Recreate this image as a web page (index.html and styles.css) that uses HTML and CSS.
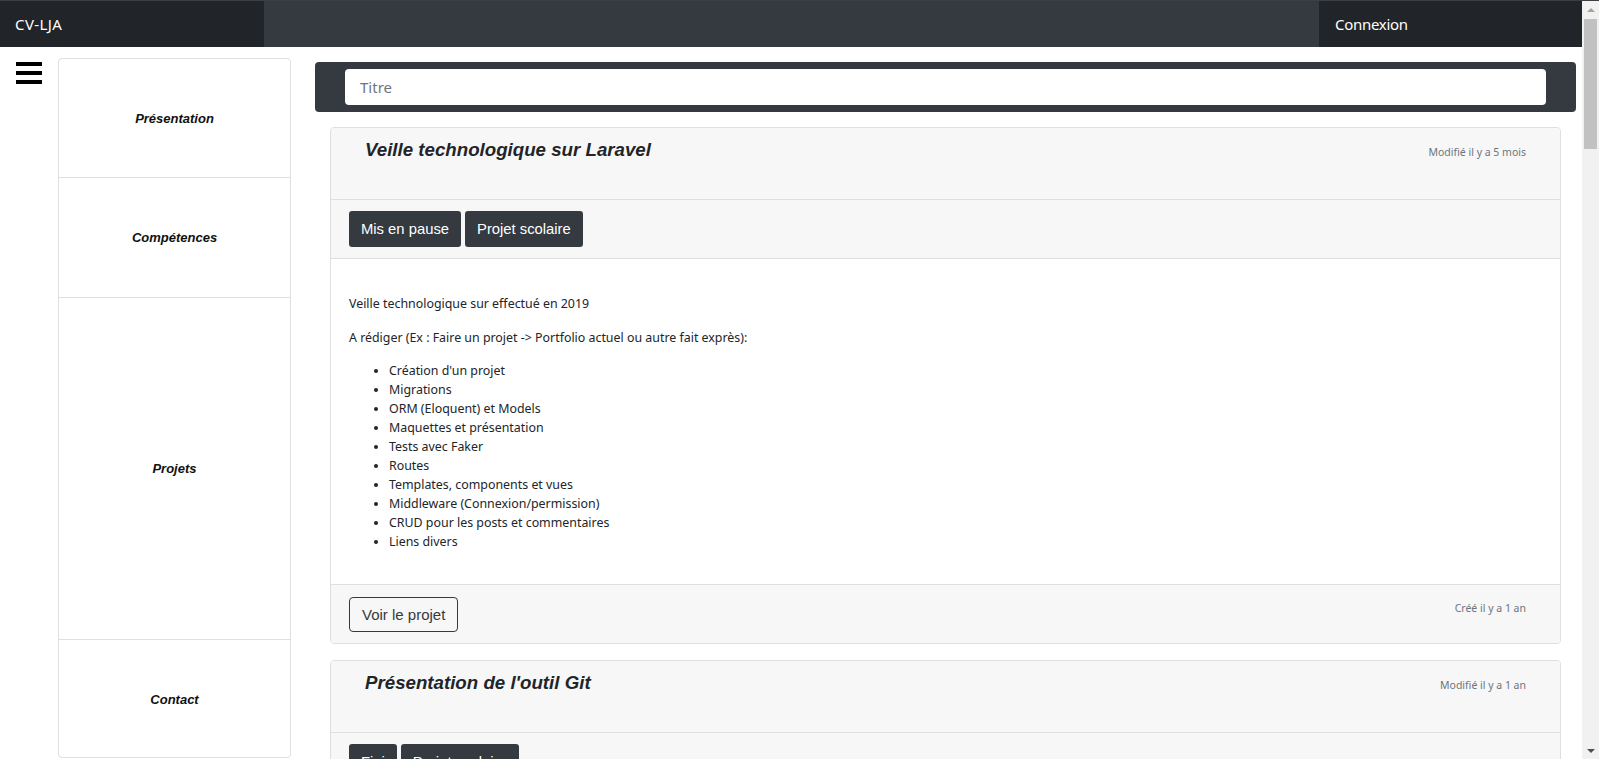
FILE: index.html
```html
<!DOCTYPE html>
<html lang="fr">
<head>
<meta charset="utf-8">
<title>CV-LJA</title>
<link rel="stylesheet" href="styles.css">
</head>
<body>
<div class="frame">
  <div class="page">
    <header class="navbar">
      <div class="brand">CV-LJA</div>
      <div class="nav-mid"></div>
      <div class="nav-right">Connexion</div>
    </header>
    <div class="main">
      <div class="burger-col">
        <span class="burger"><i></i><i></i><i></i></span>
      </div>
      <nav class="sidebar">
        <a class="side-item">Présentation</a>
        <a class="side-item">Compétences</a>
        <a class="side-item">Projets</a>
        <a class="side-item">Contact</a>
      </nav>
      <section class="content">
        <div class="search">
          <input class="search-input" type="text" placeholder="Titre">
        </div>
        <div class="cards">
          <article class="card">
            <div class="card-header">
              <h5 class="card-title">Veille technologique sur Laravel</h5>
              <small class="meta">Modifié il y a 5 mois</small>
            </div>
            <div class="card-tags">
              <span class="tag">Mis en pause</span>
              <span class="tag">Projet scolaire</span>
            </div>
            <div class="card-body">
              <p>Veille technologique sur effectué en 2019</p>
              <p>A rédiger (Ex : Faire un projet -&gt; Portfolio actuel ou autre fait exprès):</p>
              <ul>
                <li>Création d'un projet</li>
                <li>Migrations</li>
                <li>ORM (Eloquent) et Models</li>
                <li>Maquettes et présentation</li>
                <li>Tests avec Faker</li>
                <li>Routes</li>
                <li>Templates, components et vues</li>
                <li>Middleware (Connexion/permission)</li>
                <li>CRUD pour les posts et commentaires</li>
                <li>Liens divers</li>
              </ul>
            </div>
            <div class="card-footer">
              <a class="btn-outline">Voir le projet</a>
              <small class="meta">Créé il y a 1 an</small>
            </div>
          </article>
          <article class="card">
            <div class="card-header">
              <h5 class="card-title">Présentation de l'outil Git</h5>
              <small class="meta">Modifié il y a 1 an</small>
            </div>
            <div class="card-tags">
              <span class="tag">Fini</span>
              <span class="tag">Projet scolaire</span>
            </div>
          </article>
        </div>
      </section>
    </div>
  </div>
  <div class="scrollbar">
    <span class="sb-arrow sb-up"></span>
    <span class="sb-thumb"></span>
    <span class="sb-track"></span>
    <span class="sb-arrow sb-down"></span>
  </div>
</div>
</body>
</html>
```
FILE: styles.css
```css
* { box-sizing: border-box; }
html, body {
  margin: 0;
  height: 759px;
  overflow: hidden;
}
body {
  font-family: "Noto Sans", "Open Sans", sans-serif;
  color: #212529;
  background: #fff;
}
.frame {
  display: flex;
  height: 759px;
  border-top: 1px solid #3b3f44;
}
.page {
  flex: 1;
  display: flex;
  flex-direction: column;
  min-width: 0;
}
.navbar {
  display: flex;
  height: 46px;
  background: #343a40;
  color: #fff;
  font-size: 15px;
}
.brand {
  width: 264px;
  background: #212529;
  padding-left: 15px;
  display: flex;
  align-items: center;
  letter-spacing: 0.4px;
}
.nav-mid { flex: 1; }
.nav-right {
  width: 263px;
  background: #212529;
  padding-left: 16px;
  display: flex;
  align-items: center;
  letter-spacing: -0.3px;
}
.main {
  flex: 1;
  display: flex;
  align-items: flex-start;
  overflow: hidden;
}
.burger-col {
  width: 58px;
  flex: none;
  padding: 15px 0 0 16px;
}
.burger {
  display: flex;
  flex-direction: column;
  gap: 5px;
  width: 26px;
}
.burger i {
  display: block;
  height: 4px;
  background: #000;
}
.sidebar {
  flex: none;
  width: 233px;
  height: 700px;
  margin-top: 11px;
  border: 1px solid #dfdfdf;
  border-radius: 4px;
  display: grid;
  grid-template-rows: 119px 120px 342px 1fr;
}
.side-item {
  display: flex;
  align-items: center;
  justify-content: center;
  font-family: "Liberation Sans", Arial, sans-serif;
  font-style: italic;
  font-weight: bold;
  font-size: 13px;
  color: #111;
  border-bottom: 1px solid #dfdfdf;
}
.side-item:last-child { border-bottom: none; padding-top: 1px; }
.content {
  flex: none;
  width: 1261px;
  margin-left: 24px;
}
.search {
  margin-top: 15px;
  height: 50px;
  background: #343a40;
  border-radius: 4px;
  padding: 7px 30px;
}
.search-input {
  width: 100%;
  height: 36px;
  border: none;
  border-radius: 4px;
  padding: 0 15px;
  font-family: "Noto Sans", "Open Sans", sans-serif;
  font-size: 15px;
  outline: none;
}
.search-input::placeholder { color: #6c757d; }
.cards {
  padding: 15px 15px 0;
}
.card {
  border: 1px solid #dfdfdf;
  border-radius: 4px;
  margin-bottom: 16px;
  overflow: hidden;
}
.card-header {
  height: 71px;
  background: #f7f7f7;
  display: flex;
  justify-content: space-between;
  align-items: flex-start;
  padding: 10px 34px 0;
}
.card-title {
  margin: 0;
  font-family: "Liberation Sans", Arial, sans-serif;
  font-style: italic;
  font-weight: bold;
  font-size: 18.7px;
  line-height: 24px;
  color: #212529;
}
.meta {
  font-size: 10.5px;
  line-height: 16px;
  color: #6c757d;
  margin-top: 6px;
}
.card-tags {
  background: #f7f7f7;
  border-top: 1px solid #dfdfdf;
  border-bottom: 1px solid #dfdfdf;
  padding: 11px 18px;
  display: flex;
  gap: 4px;
  height: 60px;
}
.tag {
  display: inline-flex;
  align-items: center;
  height: 36px;
  padding: 0 12px;
  background: #343a40;
  color: #fff;
  border-radius: 3px;
  font-family: "Liberation Sans", Arial, sans-serif;
  font-size: 14.8px;
}
.card-body {
  height: 325px;
  padding: 35px 18px 0;
  font-size: 12.4px;
  line-height: 19px;
}
.card-body p { margin: 0 0 14.5px; }
.card-body ul {
  margin: 0;
  padding-left: 40px;
}
.card-footer {
  background: #f7f7f7;
  border-top: 1px solid #dfdfdf;
  height: 59px;
  padding: 12px 34px 0 18px;
  display: flex;
  justify-content: space-between;
  align-items: flex-start;
}
.card-footer .meta { margin-top: 3px; }
.btn-outline {
  display: inline-flex;
  align-items: center;
  height: 35px;
  padding: 0 12px;
  border: 1px solid #343a40;
  border-radius: 4px;
  color: #343a40;
  font-family: "Liberation Sans", Arial, sans-serif;
  font-size: 15px;
}
.scrollbar {
  width: 17px;
  flex: none;
  background: #f1f1f1;
  display: flex;
  flex-direction: column;
  align-items: center;
}
.sb-arrow {
  height: 17px;
  width: 17px;
  display: flex;
  align-items: center;
  justify-content: center;
}
.sb-up::before {
  content: "";
  border-left: 4px solid transparent;
  border-right: 4px solid transparent;
  border-bottom: 4px solid #a3a3a3;
}
.sb-down::before {
  content: "";
  border-left: 4px solid transparent;
  border-right: 4px solid transparent;
  border-top: 4px solid #505050;
}
.sb-thumb {
  width: 13px;
  height: 130px;
  margin-top: 1px;
  background: #c1c1c1;
}
.sb-track { flex: 1; }
```
